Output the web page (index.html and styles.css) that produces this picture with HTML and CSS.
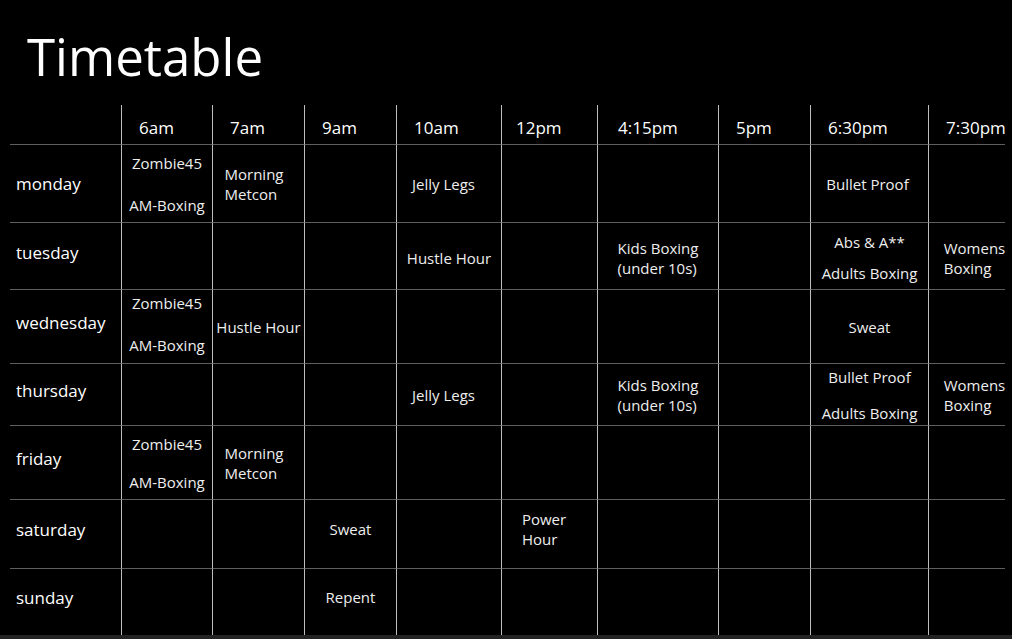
FILE: index.html
```html
<!DOCTYPE html>
<html lang="en">
<head>
<meta charset="utf-8">
<title>Timetable</title>
<link rel="stylesheet" href="styles.css">
</head>
<body>
<main class="page">
  <h1 class="title">Timetable</h1>
  <div class="timetable" role="table">
    <div class="row row-head" role="row">
      <div class="cell corner"></div>
      <div class="cell">6am</div>
      <div class="cell">7am</div>
      <div class="cell">9am</div>
      <div class="cell">10am</div>
      <div class="cell head-tight">12pm</div>
      <div class="cell head-wide">4:15pm</div>
      <div class="cell">5pm</div>
      <div class="cell">6:30pm</div>
      <div class="cell">7:30pm</div>
    </div>
    <div class="row" role="row">
      <div class="cell day">monday</div>
      <div class="cell"><div class="stack gap-22"><span>Zombie45</span><span>AM-Boxing</span></div></div>
      <div class="cell nudge-left-sm"><div class="wrap">Morning<br>Metcon</div></div>
      <div class="cell"></div>
      <div class="cell nudge-left">Jelly Legs</div>
      <div class="cell"></div>
      <div class="cell"></div>
      <div class="cell"></div>
      <div class="cell nudge-left-xs">Bullet Proof</div>
      <div class="cell"></div>
    </div>
    <div class="row row-tue" role="row">
      <div class="cell day day-raise">tuesday</div>
      <div class="cell"></div>
      <div class="cell"></div>
      <div class="cell"></div>
      <div class="cell">Hustle Hour</div>
      <div class="cell"></div>
      <div class="cell"><div class="wrap">Kids Boxing<br>(under 10s)</div></div>
      <div class="cell"></div>
      <div class="cell"><div class="stack gap-11"><span>Abs &amp; A**</span><span>Adults Boxing</span></div></div>
      <div class="cell nudge-right"><div class="wrap">Womens<br>Boxing</div></div>
    </div>
    <div class="row" role="row">
      <div class="cell day day-raise">wednesday</div>
      <div class="cell nudge-up"><div class="stack gap-22"><span>Zombie45</span><span>AM-Boxing</span></div></div>
      <div class="cell">Hustle Hour</div>
      <div class="cell"></div>
      <div class="cell"></div>
      <div class="cell"></div>
      <div class="cell"></div>
      <div class="cell"></div>
      <div class="cell">Sweat</div>
      <div class="cell"></div>
    </div>
    <div class="row" role="row">
      <div class="cell day day-raise">thursday</div>
      <div class="cell"></div>
      <div class="cell"></div>
      <div class="cell"></div>
      <div class="cell nudge-left">Jelly Legs</div>
      <div class="cell"></div>
      <div class="cell"><div class="wrap">Kids Boxing<br>(under 10s)</div></div>
      <div class="cell"></div>
      <div class="cell"><div class="stack gap-16"><span>Bullet Proof</span><span>Adults Boxing</span></div></div>
      <div class="cell nudge-right"><div class="wrap">Womens<br>Boxing</div></div>
    </div>
    <div class="row" role="row">
      <div class="cell day day-raise">friday</div>
      <div class="cell"><div class="stack gap-18"><span>Zombie45</span><span>AM-Boxing</span></div></div>
      <div class="cell nudge-left-sm"><div class="wrap">Morning<br>Metcon</div></div>
      <div class="cell"></div>
      <div class="cell"></div>
      <div class="cell"></div>
      <div class="cell"></div>
      <div class="cell"></div>
      <div class="cell"></div>
      <div class="cell"></div>
    </div>
    <div class="row row-low" role="row">
      <div class="cell day">saturday</div>
      <div class="cell"></div>
      <div class="cell"></div>
      <div class="cell">Sweat</div>
      <div class="cell"></div>
      <div class="cell nudge-left"><div class="wrap">Power<br>Hour</div></div>
      <div class="cell"></div>
      <div class="cell"></div>
      <div class="cell"></div>
      <div class="cell"></div>
    </div>
    <div class="row row-low" role="row">
      <div class="cell day">sunday</div>
      <div class="cell"></div>
      <div class="cell"></div>
      <div class="cell">Repent</div>
      <div class="cell"></div>
      <div class="cell"></div>
      <div class="cell"></div>
      <div class="cell"></div>
      <div class="cell"></div>
      <div class="cell"></div>
    </div>
  </div>
</main>
<footer class="strip"></footer>
</body>
</html>
```
FILE: styles.css
```css
html, body {
  margin: 0;
  padding: 0;
  background: #000;
}

body {
  font-family: "Open Sans", "Noto Sans", "DejaVu Sans", sans-serif;
  color: #eeeeee;
  overflow: hidden;
}

.page {
  padding: 26px 0 0 10px;
}

.title {
  margin: 0 0 19px 17px;
  font-size: 51px;
  font-weight: 400;
  line-height: 60px;
  color: #ffffff;
}

.timetable {
  display: grid;
  width: 995px;
  grid-template-columns: 111px 91px 92px 92px 105px 96px 121px 92px 118px 77px;
  grid-template-rows: 39px 78px 67px 74px 62px 74px 69px 67px;
}

.row {
  display: contents;
}

.cell {
  box-sizing: border-box;
  min-width: 0;
  border-left: 1px solid #bdbdbd;
  border-top: 1px solid #5e5e5e;
  display: flex;
  flex-direction: column;
  align-items: center;
  justify-content: center;
  font-size: 15px;
  line-height: 20px;
  white-space: nowrap;
}

.row-head .cell {
  border-top: 0;
  align-items: flex-start;
  padding: 6px 0 0 17px;
  font-size: 17px;
  line-height: 23px;
  color: #ffffff;
}

.row-head .corner {
  border-left: 0;
}

.row-head .head-tight {
  padding-left: 14px;
}

.row-head .head-wide {
  padding-left: 20px;
}

.cell.day {
  border-left: 0;
  align-items: flex-start;
  padding-left: 6px;
  font-size: 17px;
  line-height: 23px;
  color: #ffffff;
}

.row-tue .cell {
  padding-top: 3px;
}

.row-low .cell {
  padding-bottom: 10px;
}

.row .cell.day-raise {
  padding-top: 0;
  padding-bottom: 8px;
}

.cell.nudge-up {
  padding-bottom: 6px;
}

.stack {
  display: flex;
  flex-direction: column;
  align-items: center;
}

.gap-11 { gap: 11px; }
.gap-16 { gap: 16px; }
.gap-18 { gap: 18px; }
.gap-22 { gap: 22px; }

.wrap {
  width: max-content;
  text-align: left;
}

.nudge-left {
  padding-right: 11px;
}

.nudge-left-sm {
  padding-right: 9px;
}

.nudge-left-xs {
  padding-right: 4px;
}

.nudge-right {
  padding-left: 15px;
}

.strip {
  height: 4px;
  background: #232323;
}
```
